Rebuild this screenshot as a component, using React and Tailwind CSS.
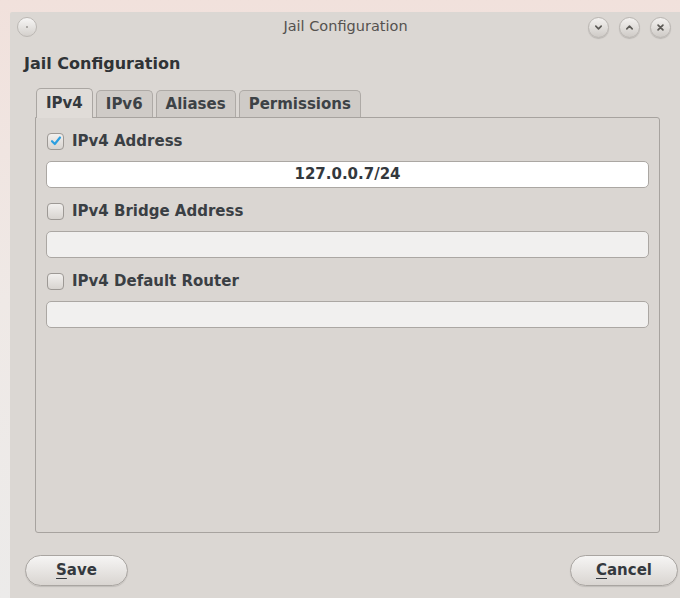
import { useState } from "react";

const tabs = ["IPv4", "IPv6", "Aliases", "Permissions"];

const fields = [
  { label: "IPv4 Address", checked: true, value: "127.0.0.7/24" },
  { label: "IPv4 Bridge Address", checked: false, value: "" },
  { label: "IPv4 Default Router", checked: false, value: "" },
];

// round title bar button with a small glyph
const TitleButton = ({ children }) => (
  <div className="w-[21px] h-[21px] rounded-full border border-[#b9b5b1] bg-gradient-to-b from-[#f4f2f0] to-[#cfcbc7] shadow-[0_1px_1px_rgba(0,0,0,0.15)] flex items-center justify-center text-[#5b5955]">
    {children}
  </div>
);

const Checkbox = ({ checked }) => (
  <div className="w-[17px] h-[17px] rounded-[4px] border border-[#9d9995] bg-gradient-to-b from-[#f2f0ee] to-[#d8d4d0] flex items-center justify-center">
    {checked && (
      <svg width="12" height="12" viewBox="0 0 12 12">
        <path d="M2 6.2 L4.8 9 L10 2.5" fill="none" stroke="#2c9fe0" strokeWidth="2.2" strokeLinecap="round" strokeLinejoin="round" />
      </svg>
    )}
  </div>
);

const DialogButton = ({ mnemonic, rest, width }) => (
  <button className={`${width} h-[31px] rounded-full border border-[#a9a5a1] bg-gradient-to-b from-[#f6f5f4] to-[#d9d5d1] shadow-[0_1px_1px_rgba(0,0,0,0.12)] text-[15px] text-[#34393e] font-bold flex items-center justify-center`}>
    <span>
      <span className="underline underline-offset-[3px] decoration-1">{mnemonic}</span>
      {rest}
    </span>
  </button>
);

export default function App() {
  const [active, setActive] = useState(0);

  return (
    <div
      className="w-[680px] h-[598px] overflow-hidden flex flex-col pt-[12px] pl-[10px] bg-gradient-to-b from-[#f1e1dc] via-[#efe9e6] to-[#ecebea]"
      style={{ fontFamily: '"DejaVu Sans", "Open Sans", sans-serif' }}
    >
      <div className="w-[670px] h-[586px] bg-[#dbd7d3] rounded-tl-[2px] flex flex-col">
        {/* title bar */}
        <div className="h-[30px] flex items-center pl-[7px] pr-[9px]">
          <div className="w-[20px] h-[20px] rounded-full border border-[#bcb8b4] bg-gradient-to-b from-[#f7f6f5] to-[#d4d0cc] flex items-center justify-center">
            <div className="w-[2px] h-[2px] rounded-full bg-[#9a9692]" />
          </div>
          <div className="flex-1 text-center text-[14.5px] text-[#55524f] pl-[66px]">Jail Configuration</div>
          <div className="flex items-center gap-[10px]">
            <TitleButton>
              <svg width="9" height="9" viewBox="0 0 10 10">
                <path d="M2 3.5 L5 6.5 L8 3.5" fill="none" stroke="currentColor" strokeWidth="1.8" strokeLinecap="round" strokeLinejoin="round" />
              </svg>
            </TitleButton>
            <TitleButton>
              <svg width="9" height="9" viewBox="0 0 10 10">
                <path d="M2 6.5 L5 3.5 L8 6.5" fill="none" stroke="currentColor" strokeWidth="1.8" strokeLinecap="round" strokeLinejoin="round" />
              </svg>
            </TitleButton>
            <TitleButton>
              <svg width="9" height="9" viewBox="0 0 10 10">
                <path d="M2.3 2.3 L7.7 7.7 M7.7 2.3 L2.3 7.7" fill="none" stroke="currentColor" strokeWidth="1.9" strokeLinecap="round" />
              </svg>
            </TitleButton>
          </div>
        </div>

        {/* heading */}
        <div className="mt-[11px] h-[22px] pl-[14px] text-[16px] leading-[22px] font-bold text-[#2f3336]">
          Jail Configuration
        </div>

        {/* tabs */}
        <div className="mt-[12px] ml-[26px] h-[30px] flex items-end gap-[3px]">
          {tabs.map((t, i) => (
            <button
              key={t}
              onClick={() => setActive(i)}
              className={
                i === active
                  ? "h-[30px] px-[9px] rounded-t-[5px] border border-b-0 border-[#aaa6a2] bg-[#e0dcd8] text-[15px] font-bold text-[#34393e] relative top-[1px] z-10"
                  : "h-[27px] px-[9px] rounded-t-[5px] border border-b-0 border-[#aeaaa6] bg-[#cfcbc7] text-[15px] font-bold text-[#3d4246]"
              }
            >
              {t}
            </button>
          ))}
        </div>

        {/* tab panel */}
        <div className="ml-[25px] w-[625px] h-[416px] rounded-[3px] rounded-tl-none border border-[#a7a39f] bg-[#dad6d2] px-[10px] pt-[12px]">
          {fields.map((f, i) => (
            <div key={f.label} className={i > 0 ? "mt-[12px]" : ""}>
              <div className="h-[22px] flex items-center gap-[8px] pl-[1px]">
                <Checkbox checked={f.checked} />
                <span className="text-[15px] font-bold text-[#3a3f44]">{f.label}</span>
              </div>
              <div
                className={`mt-[9px] h-[27px] rounded-[5px] border border-[#aba7a3] flex items-center justify-center text-[15px] font-bold text-[#33383d] ${
                  f.checked ? "bg-white" : "bg-[#f1f0ef]"
                }`}
              >
                {f.value}
              </div>
            </div>
          ))}
        </div>

        {/* dialog buttons */}
        <div className="mt-[22px] pl-[15px] pr-[2px] flex justify-between">
          <DialogButton mnemonic="S" rest="ave" width="w-[103px]" />
          <DialogButton mnemonic="C" rest="ancel" width="w-[108px]" />
        </div>
      </div>
    </div>
  );
}
